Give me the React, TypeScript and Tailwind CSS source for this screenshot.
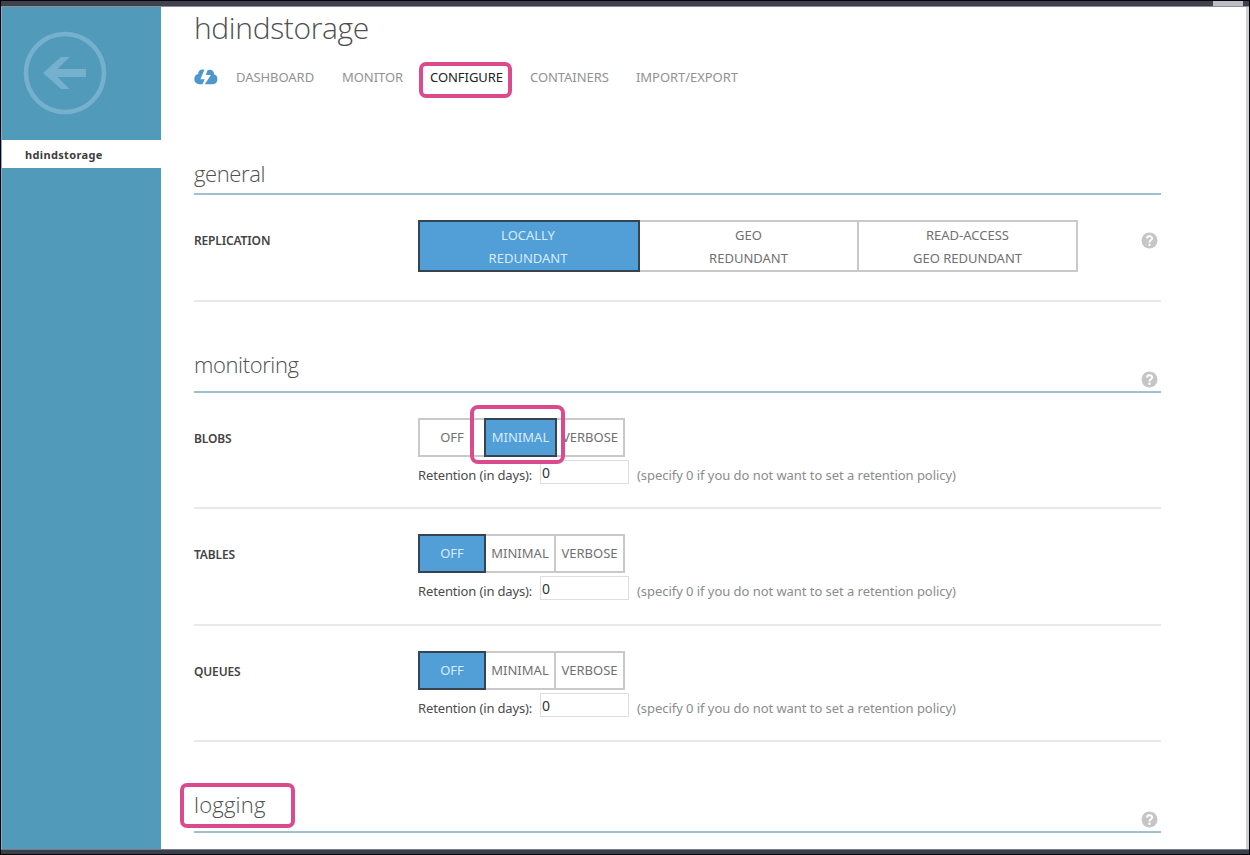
const tabs = [
  { label: "DASHBOARD", className: "w-[106px]" },
  { label: "MONITOR", className: "w-[88px]" },
  { label: "CONFIGURE", className: "w-[100px] text-[#222]", marked: true },
  { label: "CONTAINERS", className: "w-[106px]" },
  { label: "IMPORT/EXPORT", className: "" }
];

const replicationOptions = [
  ["LOCALLY", "REDUNDANT"],
  ["GEO", "REDUNDANT"],
  ["READ-ACCESS", "GEO REDUNDANT"]
];

function HelpIcon() {
  return (
    <svg width="17" height="17" viewBox="0 0 17 17" className="block shrink-0">
      <circle cx="8.5" cy="8.5" r="8" fill="#c6c6c6" />
      <path d="M5.9 6.5c.2-3 5.3-2.9 5.2 0-.1 1.9-2.6 1.8-2.6 3.9" fill="none" stroke="#fff" strokeWidth="1.9" />
      <circle cx="8.5" cy="12.8" r="1.2" fill="#fff" />
    </svg>
  );
}

function CloudIcon() {
  return (
    <svg width="24" height="16" viewBox="0 0 24 16" className="block shrink-0">
      <path d="M10.400.8C7-.5 4.100 1.500 4.200 5 1.700 5.300.3 7.500.3 10.100c0 3.200 2 5.100 5 5.100h3.200L10.700 10.300H6.400Z" fill="#4d97cf" />
      <path d="M13.400 1.400c3.400-1.600 6.800.4 6.800 4.100 2.200.4 3.200 2.300 3.200 4.600 0 3.100-1.500 5.100-4.400 5.100h-8.300l6.200-9.200h-5Z" fill="#4d97cf" />
    </svg>
  );
}

function SectionHeading({ title, help, marked }: { title: string; help?: boolean; marked?: boolean }) {
  return (
    <div className="flex h-[46px] items-end justify-between border-b-2 border-[#9fbfd4]">
      <h2 className={`relative h-[44px] text-[22px] font-light text-[#505050] font-['Open_Sans',sans-serif] ${title === "general" ? "leading-[48px] tracking-[-0.4px]" : title === "logging" ? "leading-[35px] tracking-[0.2px]" : "leading-[34px] tracking-[-0.4px]"}`}>
        {title}
        {marked && <span className="absolute -top-[4px] -left-[14px] h-[45px] w-[115px] rounded-[7px] border-4 border-[#dc4a8e]" />}
      </h2>
      {help && <div className="pr-[3px] pb-[3px]"><HelpIcon /></div>}
    </div>
  );
}

function MonitorRow({ label, selected, marked }: { label: string; selected: string; marked?: boolean }) {
  const off = selected === "OFF";
  return (
    <div className="flex h-[116.4px] shrink-0 border-b-2 border-[#e9e9e9] pt-[25px]">
      <div className="w-[224px] pt-[11px] text-[12px] leading-5 font-semibold tracking-[-0.15px] text-[#444]">{label}</div>
      <div>
        <div className="relative flex h-[39px] w-[207px] text-[13px] leading-[21px] text-[#707070]">
          <div className={off ? "flex w-[68px] items-center justify-center border-2 border-[#354450] bg-[#529ed6] text-[#d6ecfb]" : "flex w-[66px] items-center justify-center border-2 border-r-0 border-[#c9c9c9]"}>OFF</div>
          <div className={off ? "flex w-[70px] items-center justify-center border-y-2 border-r-2 border-[#c9c9c9]" : "flex w-[73px] items-center justify-center border-2 border-[#354450] bg-[#529ed6] text-[#d6ecfb]"}>MINIMAL</div>
          <div className="flex flex-1 items-center justify-center border-y-2 border-r-2 border-[#c9c9c9]">VERBOSE</div>
          {marked && <div className="absolute -top-[13px] left-[52px] h-[59px] w-[95px] rounded-[8px] border-4 border-[#dc4a8e]" />}
        </div>
        <div className="flex pt-[3px]">
          <span className="w-[122px] pt-[5px] text-[13px] leading-5 tracking-[-0.14px] text-[#4b4b4b]">Retention (in days):</span>
          <span className="h-[24px] w-[89px] border border-[#dedede] pl-px text-[14px] leading-[23px] text-[#333]">0</span>
          <span className="pt-[5px] pl-[8px] text-[13px] leading-5 tracking-[-0.05px] text-[#8c8c8c]">(specify 0 if you do not want to set a retention policy)</span>
        </div>
      </div>
    </div>
  );
}

export default function App() {
  return (
    <div className="flex h-[855px] w-[1250px] flex-col overflow-hidden border border-[#05050f] bg-white whitespace-nowrap font-['Noto_Sans',sans-serif]">
      <div className="flex h-[6px] shrink-0 justify-end border-b border-[#8e8e98] bg-[#41414d] pr-[6px]">
        <div className="w-[30px] bg-[#bdbdc4]" />
      </div>
      <div className="flex min-h-0 flex-1 border-r-[3px] border-[#cfcfcf]">
        <aside className="w-[159.5px] shrink-0 border-l border-[#7cafc9] bg-[#529aba]">
          <div className="h-[133px] pt-[24px] pl-[21px]">
            <svg width="84" height="84" viewBox="0 0 84 84" fill="none" stroke="#75b0ce">
              <circle cx="42" cy="42" r="39" strokeWidth="4.6" />
              <path d="M63 42H27" strokeWidth="8" />
              <path d="M38 26H46.500L30.500 42L46.500 58H38L20 42Z" fill="#75b0ce" stroke="none" />
            </svg>
          </div>
          <div className="h-[28px] bg-white pl-[23px] text-[11px] leading-[29px] font-bold tracking-[0.35px] text-[#3d3d3d]">hdindstorage</div>
        </aside>
        <main className="w-[1000px] pl-[33.5px]">
          <h1 className="h-[55px] text-[30px] leading-[41px] font-light tracking-[-0.35px] text-[#505050] font-['Open_Sans',sans-serif]">hdindstorage</h1>
          <nav className="flex h-[32px] items-center text-[13px] text-[#929292]">
            <div className="w-[42px] pb-[2px]"><CloudIcon /></div>
            {tabs.map((tab) => (
              <div key={tab.label} className={`relative tracking-[-0.05px] ${tab.className}`}>
                {tab.label}
                {tab.marked && <span className="absolute -top-[6px] -left-[11px] h-[36px] w-[93px] rounded-[7px] border-4 border-[#dc4a8e]" />}
              </div>
            ))}
          </nav>
          <section className="pt-[55px]">
            <SectionHeading title="general" />
            <div className="flex h-[107px] border-b-2 border-[#e9e9e9] pt-[25px]">
              <div className="w-[224px] pt-[11px] text-[12px] leading-5 font-semibold tracking-[-0.15px] text-[#444]">REPLICATION</div>
              <div className="flex h-[52px] w-[660px] text-center text-[13px] leading-[22.5px] text-[#707070]">
                {replicationOptions.map(([first, second], i) => (
                  <div key={first} className={i === 0 ? "w-[222px] border-2 border-[#354450] bg-[#529ed6] pt-[2px] pr-[2px] text-[#d6ecfb]" : "w-[219px] border-y-2 border-r-2 border-[#c9c9c9] pt-[2px]"}>
                    <div>{first}</div>
                    <div>{second}</div>
                  </div>
                ))}
              </div>
              <div className="ml-auto pt-[12px] pr-[3px]"><HelpIcon /></div>
            </div>
          </section>
          <section className="pt-[45px]">
            <SectionHeading title="monitoring" help />
            <MonitorRow label="BLOBS" selected="MINIMAL" marked />
            <MonitorRow label="TABLES" selected="OFF" />
            <MonitorRow label="QUEUES" selected="OFF" />
          </section>
          <section className="pt-[45px]">
            <SectionHeading title="logging" help marked />
          </section>
        </main>
      </div>
      <div className="h-[5px] shrink-0 border-t border-[#777c84] bg-[#3a3f4b]" />
    </div>
  );
}
